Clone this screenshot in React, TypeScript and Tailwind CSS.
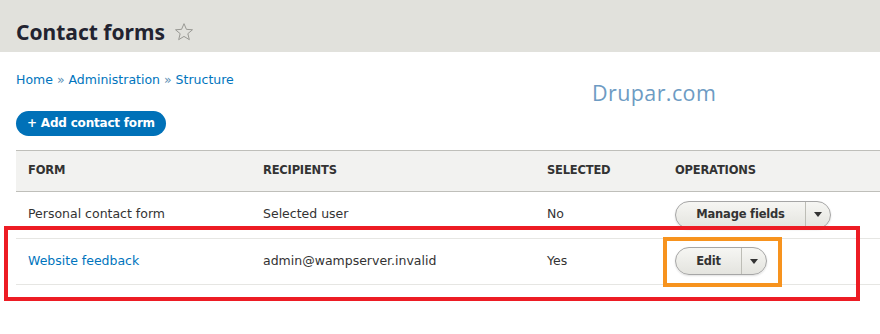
const font = { fontFamily: '"DejaVu Sans", "Liberation Sans", sans-serif' };

function SplitButton({ label, width }: { label: string; width: string }) {
  return (
    <div
      className={`flex h-[28px] ${width} items-stretch rounded-full border border-[#a6a6a6] bg-gradient-to-b from-[#f6f6f3] to-[#e4e4df] shadow-[0_1px_2px_rgba(0,0,0,0.12)]`}
    >
      <span className="flex flex-1 items-center justify-center text-[11.5px] font-bold tracking-[-0.2px] text-[#333]">
        {label}
      </span>
      <span className="flex w-[25px] items-center justify-center border-l border-[#bdbdb6]">
        <svg width="8" height="5" viewBox="0 0 8 5">
          <path d="M0 0 L8 0 L4 5 Z" fill="#333" />
        </svg>
      </span>
    </div>
  );
}

export default function App() {
  return (
    <div className="relative h-[334px] w-[880px] overflow-hidden bg-white" style={font}>
      <div className="flex h-[52px] items-end bg-[#e1e1dc] px-4 pb-[6px]">
        <h1
          className="text-[21px] font-bold leading-[28px] text-[#222330]"
          style={{ fontFamily: '"Noto Sans", "DejaVu Sans", sans-serif' }}
        >
          Contact forms
        </h1>
        <svg className="mb-[4px] ml-[9px]" width="20" height="20" viewBox="0 0 24 24">
          <path
            d="M12 2 L14.9 8.8 L22.2 9.3 L16.6 14 L18.4 21.2 L12 17.3 L5.6 21.2 L7.4 14 L1.8 9.3 L9.1 8.8 Z"
            fill="none"
            stroke="#999994"
            strokeWidth="1.2"
            strokeLinejoin="round"
          />
        </svg>
      </div>

      <div className="relative px-4 pt-[19px]">
        <div className="text-[12.5px] text-[#0074bd]">
          Home <span className="text-[#5b8fb5]">»</span> Administration{" "}
          <span className="text-[#5b8fb5]">»</span> Structure
        </div>
        <div
          className="absolute left-[592px] top-[25px] text-[21.5px] tracking-[0.4px] text-[#6d9bc3]"
          style={{ fontFamily: '"Open Sans", Lato, sans-serif' }}
        >
          Drupar.com
        </div>
        <button className="mt-[21px] flex h-[25px] items-center rounded-full bg-[#0071b8] px-[11px] text-[12px] font-bold tracking-[-0.2px] text-white">
          + Add contact form
        </button>
      </div>

      <table className="ml-4 mt-[14px] w-[864px] border-collapse text-left text-[12.5px] text-[#333]">
        <thead>
          <tr className="h-[41px] border-y border-[#bfbfba] bg-[#f2f2f0]">
            <th className="w-[247px] pl-[12px] text-[11.5px] font-bold uppercase tracking-[-0.2px] text-[#333]">Form</th>
            <th className="w-[284px] text-[11.5px] font-bold uppercase tracking-[-0.2px] text-[#333]">Recipients</th>
            <th className="w-[128px] text-[11.5px] font-bold uppercase tracking-[-0.2px] text-[#333]">Selected</th>
            <th className="text-[11.5px] font-bold uppercase tracking-[-0.2px] text-[#333]">Operations</th>
          </tr>
        </thead>
        <tbody>
          <tr className="h-[47px] border-b border-[#e6e6e3]">
            <td className="pl-[12px]">Personal contact form</td>
            <td>Selected user</td>
            <td>No</td>
            <td>
              <SplitButton label="Manage fields" width="w-[156px]" />
            </td>
          </tr>
          <tr className="h-[46px] border-b border-[#e6e6e3]">
            <td className="pl-[12px] text-[#0074bd]">Website feedback</td>
            <td>admin@wampserver.invalid</td>
            <td>Yes</td>
            <td>
              <SplitButton label="Edit" width="w-[92px]" />
            </td>
          </tr>
        </tbody>
      </table>

      {/* annotation boxes */}
      <div className="pointer-events-none absolute left-[4px] top-[226px] h-[75px] w-[856px] border-[4px] border-[#ed1c24]" />
      <div className="pointer-events-none absolute left-[663px] top-[237px] h-[50px] w-[119px] border-[4px] border-[#f7931e]" />
    </div>
  );
}
